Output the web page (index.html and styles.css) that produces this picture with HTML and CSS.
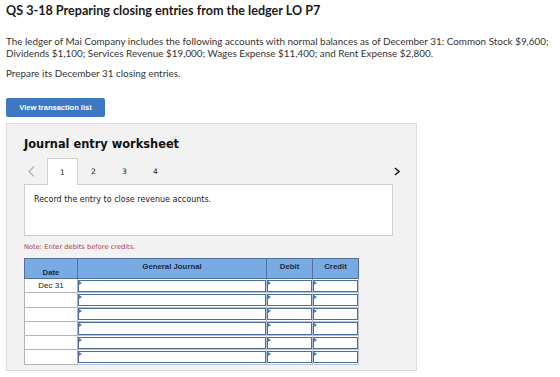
FILE: index.html
```html
<!DOCTYPE html>
<html>
<head>
<meta charset="utf-8">
<link rel="stylesheet" href="styles.css">
</head>
<body>
<div class="page">
  <h1 class="title">QS 3-18 Preparing closing entries from the ledger LO P7</h1>
  <p class="text">The ledger of Mai Company includes the following accounts with normal balances as of December 31: Common Stock $9,600; Dividends $1,100; Services Revenue $19,000; Wages Expense $11,400; and Rent Expense $2,800.</p>
  <p class="text prep">Prepare its December 31 closing entries.</p>
  <button class="btn">View transaction list</button>
  <div class="panel">
    <h2 class="ws-title">Journal entry worksheet</h2>
    <div class="tabs">
      <span class="nav prev"><svg width="7" height="11" viewBox="0 0 7 11"><path d="M6 0.5 L1 5.5 L6 10.5" fill="none" stroke="#b3b3b3" stroke-width="1.2"/></svg></span>
      <span class="tab active">1</span>
      <span class="tab">2</span>
      <span class="tab">3</span>
      <span class="tab">4</span>
      <span class="spacer"></span>
      <span class="nav next"><svg width="6" height="9" viewBox="0 0 6 9"><path d="M1 1 L5 4.5 L1 8" fill="none" stroke="#222" stroke-width="1.6"/></svg></span>
    </div>
    <div class="content">
      <div class="instr">Record the entry to close revenue accounts.</div>
    </div>
    <div class="note">Note: Enter debits before credits.</div>
    <table class="journal">
      <thead>
        <tr>
          <th class="c-date">Date</th>
          <th class="c-gj">General Journal</th>
          <th class="c-dr">Debit</th>
          <th class="c-cr">Credit</th>
        </tr>
      </thead>
      <tbody>
        <tr><td class="d">Dec 31</td><td class="in"><div class="box"></div></td><td class="in"><div class="box"></div></td><td class="in"><div class="box"></div></td></tr>
        <tr><td class="d"></td><td class="in"><div class="box"></div></td><td class="in"><div class="box"></div></td><td class="in"><div class="box"></div></td></tr>
        <tr><td class="d"></td><td class="in"><div class="box"></div></td><td class="in"><div class="box"></div></td><td class="in"><div class="box"></div></td></tr>
        <tr><td class="d"></td><td class="in"><div class="box"></div></td><td class="in"><div class="box"></div></td><td class="in"><div class="box"></div></td></tr>
        <tr><td class="d"></td><td class="in"><div class="box"></div></td><td class="in"><div class="box"></div></td><td class="in"><div class="box"></div></td></tr>
        <tr><td class="d"></td><td class="in"><div class="box"></div></td><td class="in"><div class="box"></div></td><td class="in"><div class="box"></div></td></tr>
      </tbody>
    </table>
  </div>
</div>
</body>
</html>
```

FILE: styles.css
```css
html, body {
  margin: 0;
  padding: 0;
  background: #fff;
}
.page {
  padding: 3px 6px 0 6px;
  font-family: Lato, "Open Sans", sans-serif;
  color: #222;
}
.title {
  margin: 0;
  font-size: 12.6px;
  line-height: 16px;
  font-weight: 700;
  color: #1a1a1a;
}
.text {
  margin: 16px 0 0 0;
  font-size: 9.9px;
  line-height: 12px;
  color: #333;
}
.prep {
  margin-top: 8px;
}
.btn {
  display: block;
  margin-top: 19px;
  width: 99px;
  height: 19px;
  padding: 0;
  border: none;
  border-radius: 2px;
  background: #3c78c3;
  color: #fff;
  font-family: "Liberation Sans", Arial, sans-serif;
  font-weight: 700;
  font-size: 7.5px;
}
.panel {
  margin-top: 6px;
  width: 411px;
  height: 248px;
  box-sizing: border-box;
  background: #f2f2f2;
  border: 1px solid #dcdcdc;
  padding: 0 0 0 17px;
  font-family: "DejaVu Sans", Verdana, sans-serif;
}
.ws-title {
  margin: 12px 0 0 0;
  font-size: 11.4px;
  line-height: 16px;
  font-weight: 700;
  color: #111;
}
.tabs {
  display: flex;
  align-items: stretch;
  height: 26px;
  margin-top: 6px;
  width: 376px;
}
.nav {
  display: flex;
  align-items: center;
}
.prev {
  width: 23px;
  padding-left: 4px;
  box-sizing: border-box;
}
.tab {
  width: 31px;
  display: flex;
  align-items: center;
  justify-content: center;
  font-size: 7.5px;
  color: #222;
  box-sizing: border-box;
}
.tab.active {
  background: #fff;
  border: 1px solid #cfcfcf;
  border-bottom: none;
  position: relative;
  margin-bottom: -1px;
  z-index: 1;
}
.spacer { flex: 1; }
.content {
  width: 369px;
  height: 52px;
  box-sizing: border-box;
  background: #fff;
  border: 1px solid #cfcfcf;
  padding: 10px 0 0 9px;
}
.instr {
  font-size: 8px;
  color: #222;
}
.note {
  margin-top: 6px;
  font-size: 6.7px;
  color: #b5423c;
  line-height: 10px;
}
.journal {
  margin-top: 6px;
  border-collapse: collapse;
  table-layout: fixed;
  width: 335px;
  font-family: "Liberation Sans", Arial, sans-serif;
}
.journal th {
  background: #78aae4;
  border: 1px solid #51709c;
  height: 20px;
  padding: 0;
  font-size: 7.8px;
  font-weight: 700;
  color: #1b2b44;
  vertical-align: top;
  padding-top: 3px;
  box-sizing: border-box;
}
.journal th.c-date {
  vertical-align: bottom;
  padding-top: 0;
  padding-bottom: 1px;
}
.c-date { width: 53px; }
.c-gj { width: 189px; }
.c-dr { width: 46px; }
.c-cr { width: 46px; }
.journal td {
  height: 14.3px;
  padding: 0;
  box-sizing: border-box;
}
.journal td.d {
  background: #fff;
  border: 1px solid #b4b4b4;
  text-align: center;
  font-size: 8px;
  color: #222;
}
.journal td.in {
  border: 1px solid #b8c3d3;
  background: #fff;
}
.box {
  position: relative;
  height: 12.3px;
  border: 1px solid #4e6d9c;
  box-sizing: border-box;
  background: #fff;
}
.box::before {
  content: "";
  position: absolute;
  left: 0;
  top: 0;
  border-top: 2px solid transparent;
  border-bottom: 2px solid transparent;
  border-left: 3px solid #3f7fd0;
}
```
